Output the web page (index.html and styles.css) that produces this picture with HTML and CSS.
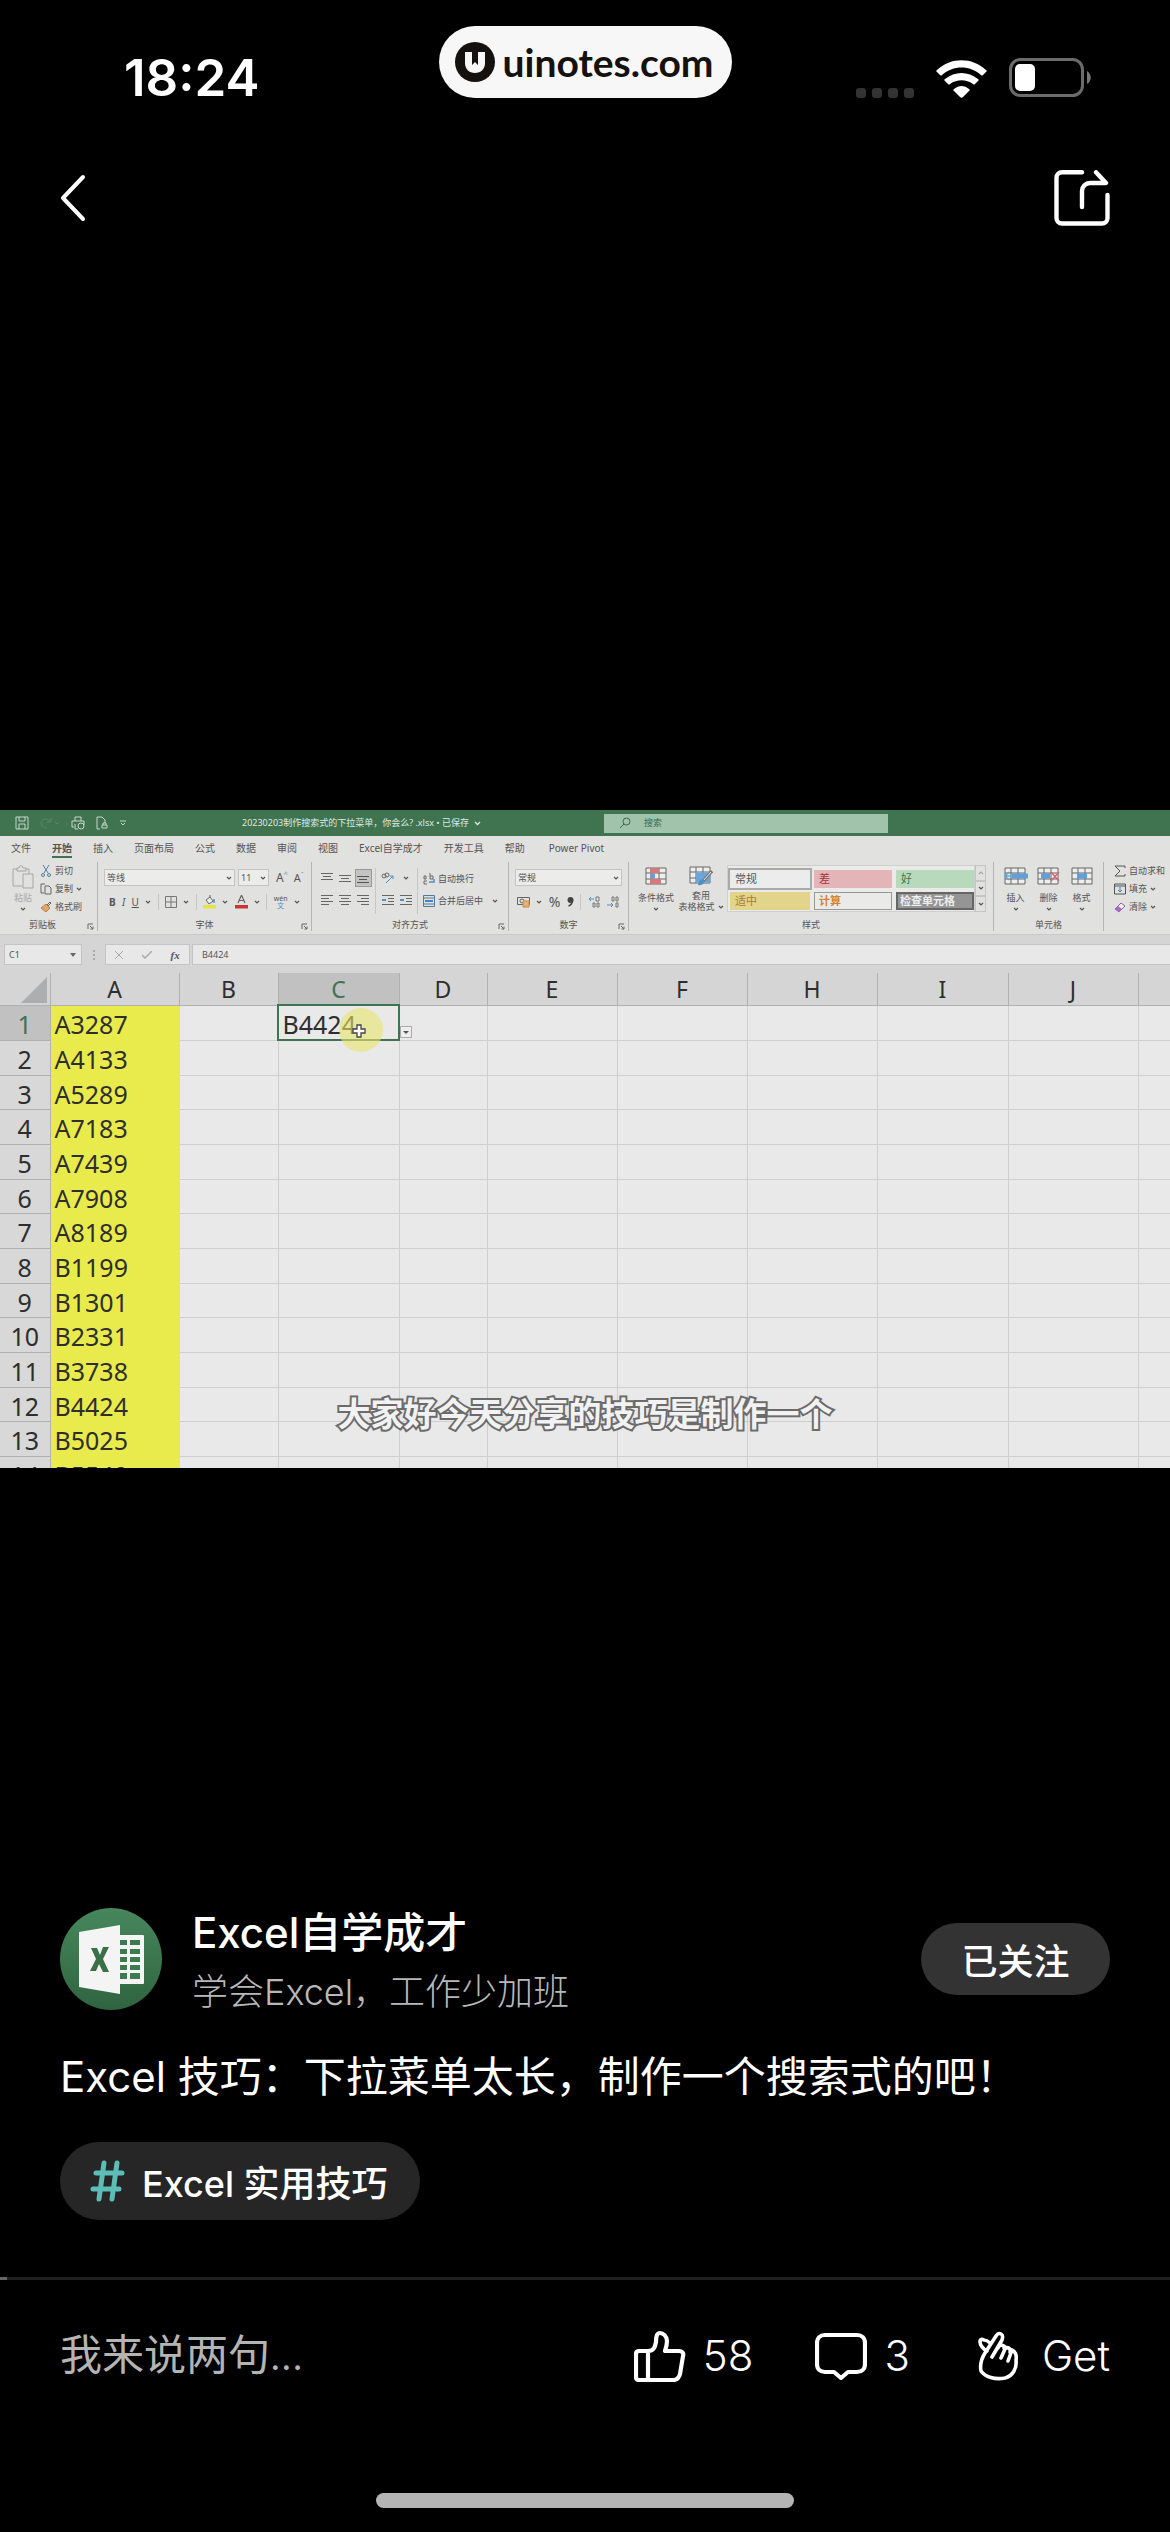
FILE: index.html
```html
<!DOCTYPE html>
<html lang="zh-CN">
<head>
<meta charset="utf-8">
<meta name="viewport" content="width=device-width, initial-scale=1">
<title>Excel 技巧</title>
<link rel="stylesheet" href="styles.css">
</head>
<body>
<svg class="defs" aria-hidden="true">
  <symbol id="caret" viewBox="0 0 6 4"><path d="M1 1l2 2 2-2" fill="none" stroke="#555" stroke-width="1.2"/></symbol>
  <symbol id="launch" viewBox="0 0 7 7"><path d="M1 6V1h5M3 3l3 3M6 3.500V6H3.500" fill="none" stroke="#666"/></symbol>
  <symbol id="grid" viewBox="0 0 22 18"><path d="M1 1h20v16H1zM1 6h20M1 12h20M7 1v16M14 1v16" fill="#eee" stroke="#666"/></symbol>
</svg>
<div class="screen">
  <header class="top">
    <div class="status">
      <time class="clock">18:24</time>
      <div class="brand">
        <svg width="40" height="40" viewBox="0 0 40 40"><circle cx="20" cy="20" r="20" fill="#14110f"/><path d="M10 10h7v13l3-3 3 3V10h7v11c0 6-4 10-10 10s-10-4-10-10z" fill="#f7f7f7"/></svg>
        <span>uinotes.com</span>
      </div>
      <div class="signals">
        <svg width="58" height="10" viewBox="0 0 58 10" fill="#333"><rect width="10" height="10" rx="3"/><rect x="16" width="10" height="10" rx="3"/><rect x="32" width="10" height="10" rx="3"/><rect x="48" width="10" height="10" rx="3"/></svg>
        <svg class="wifi" width="51" height="38" viewBox="0 0 51 38" fill="#fff"><path d="M1 10C15-3 36-3 50 10c1 1 1 1 0 2l-3 3c-1 1-1 1-2 0C34 5 17 5 6 15c-1 1-1 1-2 0l-3-3c-1-1-1-1 0-2z"/><path d="M9 19c10-8 23-8 33 0 1 1 1 1 0 2l-3 3c-1 1-1 1-2 0-7-5-16-5-23 0-1 1-1 1-2 0l-3-3c-1-1-1-1 0-2z"/><path d="M18 29c5-4 10-4 15 0 1 1 1 1 0 2l-6 6c-1 1-2 1-3 0l-6-6c-1-1-1-1 0-2z"/></svg>
        <svg width="83" height="40" viewBox="0 0 83 40"><rect x="1.500" y="1.500" width="72" height="36" rx="10" fill="none" stroke="#6b6b6b" stroke-width="3"/><rect x="6" y="6" width="20" height="27" rx="5" fill="#fff"/><path d="M78 13c5 3 5 10 0 13z" fill="#777"/></svg>
      </div>
    </div>
    <nav class="nav">
      <button class="icon-btn" aria-label="返回"><svg width="28" height="50" viewBox="0 0 28 50"><path d="M24 4L4 25l20 21" fill="none" stroke="#fff" stroke-width="4" stroke-linecap="round" stroke-linejoin="round"/></svg></button>
      <button class="icon-btn" aria-label="分享"><svg width="56" height="56" viewBox="0 0 56 56" fill="none" stroke="#fff" stroke-width="4.400" stroke-linecap="round" stroke-linejoin="round"><path d="M28 2.300H8a5.500 5.500 0 0 0-5.500 5.500V48a5.500 5.500 0 0 0 5.500 5.500h40a5.500 5.500 0 0 0 5.500-5.500V25"/><path d="M42 2.300L52 13H36a8 8 0 0 0-8 8v16"/></svg></button>
    </nav>
  </header>

  <main class="stage">
    <section class="video" aria-label="视频">
      <div class="titlebar">
        <div class="quick">
          <svg width="14" height="14" viewBox="0 0 14 14" fill="none" stroke="#c7d8cb"><path d="M1 1h12v12H1zM4 1v4h6V1M4 13V8h6v5"/></svg>
          <svg width="20" height="14" viewBox="0 0 20 14" fill="none" stroke="#5d8869"><path d="M11 2v4H7M11 6C7 1 1 3 1 7c0 3 3 5 5 5M15 6l2 2 2-2"/></svg>
          <svg width="14" height="14" viewBox="0 0 14 14" fill="none" stroke="#c7d8cb"><path d="M4 5V1h6v4M3 11H1V5h12v4M4 8v5h3"/><circle cx="10" cy="10" r="3"/></svg>
          <svg width="13" height="14" viewBox="0 0 13 14" fill="none" stroke="#c7d8cb"><path d="M4 13H1V1h5l3 3v3M6 12V9h5v3zM7 9V7h3v2"/></svg>
          <svg width="6" height="6" viewBox="0 0 6 6" fill="none" stroke="#c7d8cb"><path d="M0 1h6M1 3l2 2 2-2"/></svg>
        </div>
        <div class="filename">20230203制作搜索式的下拉菜单，你会么? .xlsx • 已保存 <svg width="7" height="5" viewBox="0 0 7 5"><path d="M1 1l2.500 2.500L6 1" fill="none" stroke="#dfe9e1" stroke-width="1.300"/></svg></div>
        <div class="search"><svg width="12" height="12" viewBox="0 0 12 12" fill="none" stroke="#3c6b49"><circle cx="7.500" cy="4.500" r="3.500"/><path d="M5 7l-4 4"/></svg>搜索</div>
      </div>
      <div class="tabs">
        <span>文件</span><span class="active">开始</span><span>插入</span><span>页面布局</span><span>公式</span><span>数据</span><span>审阅</span><span>视图</span><span>Excel自学成才</span><span>开发工具</span><span>帮助</span><span class="pivot">Power Pivot</span>
      </div>
      <div class="ribbon">
        <div class="group g-clip">
          <div class="body">
            <div class="big faded"><svg width="22" height="24" viewBox="0 0 22 24" fill="none" stroke="#a6a6a6"><path d="M10 21H1V4h4M14 4h3v5M5 6V3h2c0-3 4-3 4 0h3v3zM11 9h10v14H11z"/></svg><span>粘贴</span><svg class="caret"><use href="#caret"/></svg></div>
            <div class="stack">
              <div class="item"><svg width="12" height="12" viewBox="0 0 12 12" fill="none" stroke="#4f7ea8"><path d="M3 0l5 8M9 0L4 8"/><circle cx="3" cy="10" r="1.500"/><circle cx="9" cy="10" r="1.500"/></svg>剪切</div>
              <div class="item"><svg width="12" height="12" viewBox="0 0 12 12" fill="none" stroke="#666"><path d="M4 10H1V1h4M5 3h4l2 2v6H5z"/></svg>复制<svg class="caret"><use href="#caret"/></svg></div>
              <div class="item"><svg width="12" height="12" viewBox="0 0 12 12" fill="none" stroke="#666"><path d="M7 4l3-3 1 1-3 3"/><path d="M6 3l4 4-4 4-5-4z" fill="#e2a76b" stroke="#b98046"/></svg>格式刷</div>
            </div>
          </div>
          <div class="label">剪贴板<svg class="launch"><use href="#launch"/></svg></div>
        </div>
        <div class="group g-font">
          <div class="body rows">
            <div class="row">
              <div class="combo wide">等线<svg class="caret"><use href="#caret"/></svg></div>
              <div class="combo size">11<svg class="caret"><use href="#caret"/></svg></div>
              <span class="glyph">A<sup>^</sup></span><span class="glyph sm">A<sup>ˇ</sup></span>
            </div>
            <div class="row spread">
              <b>B</b><i>I</i><u>U</u><svg class="caret"><use href="#caret"/></svg><span class="sep"></span>
              <svg width="12" height="12" viewBox="0 0 12 12" fill="none" stroke="#777"><path d="M.500.500h11v11H.500zM6 1v10M1 6h10"/></svg><svg class="caret"><use href="#caret"/></svg><span class="sep"></span>
              <svg width="13" height="14" viewBox="0 0 13 14"><path d="M3 5l4-3 3 4-4 3zM7 2V0" fill="#eee" stroke="#666"/><path d="M11 4v4" stroke="#4f8fc4" stroke-width="1.500"/><path d="M0 10h13v3.500H0z" fill="#e5e53c"/></svg><svg class="caret"><use href="#caret"/></svg>
              <svg width="13" height="14" viewBox="0 0 13 14"><path d="M3 8l3.500-8L10 8M4.500 5.500h4" fill="none" stroke="#666" stroke-width="1.200"/><path d="M0 10h13v3.500H0z" fill="#c93434"/></svg><svg class="caret"><use href="#caret"/></svg><span class="sep"></span>
              <span class="pinyin">wén<br><em>文</em></span><svg class="caret"><use href="#caret"/></svg>
            </div>
          </div>
          <div class="label">字体<svg class="launch"><use href="#launch"/></svg></div>
        </div>
        <div class="group g-align">
          <div class="body">
            <div class="aligns">
              <svg width="12" height="12" viewBox="0 0 12 12" stroke="#666"><path d="M0 1.500h12M2 4.500h8M0 7.500h12"/></svg>
              <svg width="12" height="12" viewBox="0 0 12 12" stroke="#666"><path d="M0 3.500h12M2 6.500h8M0 9.500h12"/></svg>
              <span class="pressed"><svg width="12" height="12" viewBox="0 0 12 12" stroke="#555"><path d="M0 4.500h12M2 7.500h8M0 10.500h12"/></svg></span>
              <svg width="12" height="12" viewBox="0 0 12 12" stroke="#666"><path d="M0 1.500h12M0 4.500h8M0 7.500h12M0 10.500h8"/></svg>
              <svg width="12" height="12" viewBox="0 0 12 12" stroke="#666"><path d="M0 1.500h12M2 4.500h8M0 7.500h12M2 10.500h8"/></svg>
              <svg width="12" height="12" viewBox="0 0 12 12" stroke="#666"><path d="M0 1.500h12M4 4.500h8M0 7.500h12M4 10.500h8"/></svg>
            </div>
            <div class="indents">
              <svg width="14" height="12" viewBox="0 0 14 12" fill="none" stroke="#666"><circle cx="3" cy="4" r="2"/><circle cx="6" cy="3" r="2"/><path d="M5 11l7-7M9 4h3v3" stroke="#4f8fc4"/></svg><svg class="caret"><use href="#caret"/></svg>
              <svg width="12" height="12" viewBox="0 0 12 12" stroke="#666"><path d="M0 1.500h12M6 4.500h6M6 7.500h6M0 10.500h12"/><path d="M0 6h4" stroke="#4f8fc4" stroke-width="2"/></svg>
              <svg width="12" height="12" viewBox="0 0 12 12" stroke="#666"><path d="M0 1.500h12M6 4.500h6M6 7.500h6M0 10.500h12"/><path d="M0 6h4" stroke="#4f8fc4" stroke-width="2"/></svg>
            </div>
            <div class="wraps">
              <div class="item"><svg width="12" height="12" viewBox="0 0 12 12" fill="none" stroke="#666"><path d="M1 3h2v3H1zM7 0v6h3V3H7M4 8H1v3h3"/><path d="M11 6v3H6" stroke="#4f8fc4" stroke-width="1.500"/></svg>自动换行</div>
              <div class="item"><svg width="12" height="12" viewBox="0 0 12 12" fill="none" stroke="#557a99"><path d="M.500.500h11v11H.500zM1 3h10M1 9h10"/><path d="M2 6h8" stroke="#3f87c8" stroke-width="2"/></svg>合并后居中<svg class="caret"><use href="#caret"/></svg></div>
            </div>
          </div>
          <div class="label">对齐方式<svg class="launch"><use href="#launch"/></svg></div>
        </div>
        <div class="group g-num">
          <div class="body rows">
            <div class="row"><div class="combo full">常规<svg class="caret"><use href="#caret"/></svg></div></div>
            <div class="row spread">
              <svg width="13" height="12" viewBox="0 0 13 12" fill="none" stroke="#666"><path d="M.500 1.500h12v7H.500z"/><circle cx="5" cy="5" r="2"/><path d="M6 5h6v6H6z" fill="#e2b27a" stroke="#c98c45"/></svg><svg class="caret"><use href="#caret"/></svg><span class="pct">%</span>
              <svg width="7" height="10" viewBox="0 0 7 10"><circle cx="3.500" cy="3" r="3" fill="#444"/><path d="M5.500 3c0 3-1 5-4 6" fill="none" stroke="#444" stroke-width="1.600"/></svg><span class="sep"></span>
              <svg width="13" height="12" viewBox="0 0 13 12" fill="none" stroke="#777"><path d="M8 1h3v4H8zM5 7h2v4H5zM9 7h2v4H9z"/><path d="M6 3H1M3 1L1 3l2 2" stroke="#4f8fc4"/></svg>
              <svg width="13" height="12" viewBox="0 0 13 12" fill="none" stroke="#777"><path d="M5 1h2v4H5zM9 1h2v4H9zM9 7h2v4H9z"/><path d="M0 9h6M4 7l2 2-2 2" stroke="#4f8fc4"/></svg>
            </div>
          </div>
          <div class="label">数字<svg class="launch"><use href="#launch"/></svg></div>
        </div>
        <div class="group g-style">
          <div class="body">
            <div class="big"><svg width="22" height="18" viewBox="0 0 22 18"><use href="#grid" width="22" height="18"/><path d="M5 1h9v5H5zM5 12h11v5H5z" fill="#d8777c"/><path d="M5 6.500h5v5H5z" fill="#6f9ecb"/></svg><span>条件格式</span><svg class="caret"><use href="#caret"/></svg></div>
            <div class="big"><svg width="24" height="20" viewBox="0 0 24 20"><use href="#grid" width="22" height="18"/><path d="M7 6.500h14v10H7z" fill="#6aa5dc"/><path d="M23 5l-9 10" stroke="#777" stroke-width="3"/><path d="M22 6l-8 9" stroke="#eee"/><path d="M15 14c-2-2-5 0-6 5 4 1 7-2 6-5z" fill="#4f8fc4"/></svg><span>套用</span><span class="two">表格格式<svg class="caret"><use href="#caret"/></svg></span></div>
            <div class="gallery">
              <span class="c-normal">常规</span><span class="c-bad">差</span><span class="c-good">好</span>
              <span class="c-neutral">适中</span><span class="c-calc">计算</span><span class="c-check">检查单元格</span>
            </div>
            <div class="scroller"><span><svg class="caret up"><use href="#caret"/></svg></span><span><svg class="caret"><use href="#caret"/></svg></span><span><svg class="caret"><use href="#caret"/></svg></span></div>
          </div>
          <div class="label">样式</div>
        </div>
        <div class="group g-cells">
          <div class="body">
            <div class="big"><svg width="24" height="18" viewBox="0 0 24 18"><use href="#grid" width="22" height="18"/><path d="M8 6.500h16v5H8z" fill="#5f9fdb"/><path d="M9 9H1M5 5L1 9l4 4" fill="none" stroke="#5aa7d6" stroke-width="1.500"/></svg><span>插入</span><svg class="caret"><use href="#caret"/></svg></div>
            <div class="big"><svg width="24" height="18" viewBox="0 0 24 18"><use href="#grid" width="22" height="18"/><path d="M4 6.500h9v5H4z" fill="#5f9fdb"/><path d="M14 5l8 9M22 5l-8 9" stroke="#d9676c" stroke-width="1.500"/></svg><span>删除</span><svg class="caret"><use href="#caret"/></svg></div>
            <div class="big"><svg width="22" height="18" viewBox="0 0 22 18"><use href="#grid" width="22" height="18"/><path d="M6 6.500h10v5H6z" fill="#5f9fdb"/></svg><span>格式</span><svg class="caret"><use href="#caret"/></svg></div>
          </div>
          <div class="label">单元格</div>
        </div>
        <div class="group g-edit">
          <div class="body">
            <div class="stack">
              <div class="item"><svg width="12" height="12" viewBox="0 0 12 12" fill="none" stroke="#555"><path d="M11 3V1H1l5 5-5 5h10V9"/></svg>自动求和</div>
              <div class="item"><svg width="12" height="12" viewBox="0 0 12 12" fill="none" stroke="#555"><path d="M.500 1h11v10H.500zM1 3h10"/><path d="M6 4v5M4 7l2 2 2-2" stroke="#3f87c8"/></svg>填充<svg class="caret"><use href="#caret"/></svg></div>
              <div class="item"><svg width="12" height="12" viewBox="0 0 12 12"><path d="M1 8l6-6 4 3-6 6z" fill="#eee" stroke="#9a5fb0"/><path d="M1 8l3-3 4 3-3 3z" fill="#a76cc0"/></svg>清除<svg class="caret"><use href="#caret"/></svg></div>
            </div>
          </div>
        </div>
      </div>
      <div class="formula">
        <div class="namebox">C1<svg width="6" height="4" viewBox="0 0 6 4"><path d="M0 0h6L3 4z" fill="#666"/></svg></div>
        <svg class="dots" width="2" height="10" viewBox="0 0 2 10" fill="#aaa"><path d="M0 0h2v2H0zM0 4h2v2H0zM0 8h2v2H0z"/></svg>
        <div class="fx"><svg width="8" height="8" viewBox="0 0 8 8"><path d="M0 0l8 8M8 0L0 8" stroke="#aaa"/></svg><svg width="10" height="8" viewBox="0 0 10 8"><path d="M0 4l3 3 7-7" fill="none" stroke="#aaa" stroke-width="1.500"/></svg><i>fx</i></div>
        <div class="expr">B4424</div>
      </div>
      <table class="sheet">
        <colgroup><col class="w-n"><col class="w-a"><col class="w-b"><col class="w-c"><col class="w-d"><col class="w-e"><col class="w-e"><col class="w-e"><col class="w-i"><col class="w-e"><col class="w-k"></colgroup>
        <thead><tr><th class="corner"><svg width="26" height="26" viewBox="0 0 26 26"><path d="M26 0v26H0z" fill="#adaeb0"/></svg></th><th>A</th><th>B</th><th class="sel">C</th><th>D</th><th>E</th><th>F</th><th>H</th><th>I</th><th>J</th><th></th></tr></thead>
        <tbody>
          <tr><th class="sel">1</th><td>A3287</td><td></td><td class="picked">B4424<svg class="cursor" width="44" height="44" viewBox="0 0 44 44"><circle cx="22" cy="22" r="22" fill="#e9e56a" fill-opacity=".6"/><path d="M18 17h4v4h4v4h-4v4h-4v-4h-4v-4h4z" fill="#fff" stroke="#444" stroke-width="1.300"/></svg><svg class="drop" width="12" height="12" viewBox="0 0 12 12"><path d="M.500.500h11v11H.500z" fill="#eee" stroke="#aaa"/><path d="M3 5h6L6 8z" fill="#555"/></svg></td><td></td><td></td><td></td><td></td><td></td><td></td><td></td></tr>
          <tr><th>2</th><td>A4133</td><td></td><td></td><td></td><td></td><td></td><td></td><td></td><td></td><td></td></tr>
          <tr><th>3</th><td>A5289</td><td></td><td></td><td></td><td></td><td></td><td></td><td></td><td></td><td></td></tr>
          <tr><th>4</th><td>A7183</td><td></td><td></td><td></td><td></td><td></td><td></td><td></td><td></td><td></td></tr>
          <tr><th>5</th><td>A7439</td><td></td><td></td><td></td><td></td><td></td><td></td><td></td><td></td><td></td></tr>
          <tr><th>6</th><td>A7908</td><td></td><td></td><td></td><td></td><td></td><td></td><td></td><td></td><td></td></tr>
          <tr><th>7</th><td>A8189</td><td></td><td></td><td></td><td></td><td></td><td></td><td></td><td></td><td></td></tr>
          <tr><th>8</th><td>B1199</td><td></td><td></td><td></td><td></td><td></td><td></td><td></td><td></td><td></td></tr>
          <tr><th>9</th><td>B1301</td><td></td><td></td><td></td><td></td><td></td><td></td><td></td><td></td><td></td></tr>
          <tr><th>10</th><td>B2331</td><td></td><td></td><td></td><td></td><td></td><td></td><td></td><td></td><td></td></tr>
          <tr><th>11</th><td>B3738</td><td></td><td></td><td></td><td></td><td></td><td></td><td></td><td></td><td></td></tr>
          <tr><th>12</th><td>B4424</td><td></td><td></td><td></td><td></td><td></td><td></td><td></td><td></td><td></td></tr>
          <tr><th>13</th><td>B5025</td><td></td><td></td><td></td><td></td><td></td><td></td><td></td><td></td><td></td></tr>
          <tr><th>14</th><td>B5540</td><td></td><td></td><td></td><td></td><td></td><td></td><td></td><td></td><td></td></tr>
        </tbody>
      </table>
      <p class="caption">大家好今天分享的技巧是制作一个</p>
    </section>
  </main>

  <section class="info">
    <div class="author">
      <svg class="avatar" width="102" height="102" viewBox="0 0 102 102"><defs><linearGradient id="ag" x2="0" y2="1"><stop stop-color="#47875c"/><stop offset="1" stop-color="#2f6440"/></linearGradient></defs><circle cx="51" cy="51" r="51" fill="url(#ag)"/><rect x="52" y="27" width="32" height="49" rx="1" fill="#f4f4f4"/><path d="M58 32h9v5h-9zM70 32h10v5H70zM58 41h9v5h-9zM70 41h10v5H70zM58 49h9v5h-9zM70 49h10v5H70zM58 57h9v5h-9zM70 57h10v5H70zM58 65h9v6h-9zM70 65h10v6H70z" fill="#3c7a50"/><path d="M19 24l41-7v69l-41-7z" fill="#f4f4f4"/><path d="M31 40h6l3 7 3-8h6l-6 12 6 13h-6l-4-8-3 7h-6l6-12z" fill="#3a7048"/></svg>
      <div class="who"><h2>Excel自学成才</h2><p>学会Excel，工作少加班</p></div>
      <button class="follow">已关注</button>
    </div>
    <h1>Excel 技巧：下拉菜单太长，制作一个搜索式的吧！</h1>
    <a class="tag" href="#"><svg width="35" height="42" viewBox="0 0 35 42" fill="none" stroke="#5cbdb6" stroke-width="5" stroke-linecap="round"><path d="M14 3L9 39M27 3l-5 36M6 13h26M3 29h26"/></svg>Excel 实用技巧</a>
  </section>

  <div class="progress"><div class="played"></div></div>
  <footer class="bar">
    <input class="comment" type="text" placeholder="我来说两句..." aria-label="评论">
    <button class="action"><svg width="52" height="52" viewBox="0 0 52 52" fill="none" stroke="#fff" stroke-width="4.200" stroke-linejoin="round"><path d="M5 21h9c6 0 7-4 8-9 0-6 1-9 4-9s7 3 7 8c0 4-1 7-2 10h14c3 0 5 2 4 5l-3 18c-1 4-3 6-7 6H5c-2 0-3-1-3-3V24c0-2 1-3 3-3zM14 21v29"/></svg>58</button>
    <button class="action"><svg width="52" height="48" viewBox="0 0 52 48" fill="none" stroke="#fff" stroke-width="4.200" stroke-linejoin="round"><path d="M10 3h32c5 0 8 3 8 8v21c0 5-3 8-8 8h-9l-7 6-7-6h-9c-5 0-8-3-8-8V11c0-5 3-8 8-8z"/></svg>3</button>
    <button class="action get"><svg width="42" height="50" viewBox="0 0 42 50" fill="none" stroke="#fff" stroke-width="3.600" stroke-linecap="round" stroke-linejoin="round"><path d="M14 26L24 9M9 20C5 18 2 14 2 11c0-3 2-3 4-2 2 0 4 1 6 3M7 22L18 5c2-3 3-3 5-2s2 3 1 6l-4 8M7 22c-5 8-5 13-4 18 4 6 14 9 24 7 8-2 12-10 11-18 1-5-1-9-4-10l-4 11M14 26L20 16c4-3 7-2 7 2l-4 9M26 17c4-1 7 0 6 4"/></svg>Get</button>
  </footer>
  <div class="home"></div>
</div>
</body>
</html>
```
FILE: styles.css
```css
* { box-sizing: border-box; }
body { margin: 0; background: #000; color: #fff; font-family: Inter, "Noto Sans CJK SC", sans-serif; }
h1, h2, p { margin: 0; font-weight: 400; }
button { border: 0; padding: 0; background: none; color: inherit; font: inherit; }
svg { flex: none; display: block; }
.defs { position: absolute; width: 0; height: 0; }
.screen { min-height: 100vh; display: flex; flex-direction: column; }

/* status bar and navigation */
.status { display: grid; grid-template-columns: 1fr auto 1fr; height: 124px; padding: 26px 78px 0 124px; }
.clock { font: 600 51px/60px Inter, sans-serif; padding-top: 22px; }
.brand { display: flex; align-items: center; gap: 8px; width: 293px; height: 72px; margin-right: 46px; padding: 0 16px; border-radius: 36px; background: #f7f7f7; color: #14110f; font: 700 39px/46px Lato, sans-serif; }
.signals { display: flex; justify-content: flex-end; align-items: flex-end; height: 72px; gap: 22px; }
.nav { display: flex; justify-content: space-between; align-items: center; padding: 46px 60px 0 59px; height: 102px; }
.icon-btn { display: flex; }

/* video frame */
.stage { flex: 1; display: flex; align-items: center; padding-top: 150px; }
.video { position: relative; width: 100%; aspect-ratio: 1170 / 658; overflow: hidden; background: #d5d5d5; color: #555; font: 9px/12px "Noto Sans", "Noto Sans CJK SC", sans-serif; white-space: nowrap; }
.titlebar { display: flex; align-items: center; height: 26px; padding-left: 15px; background: #40734f; color: #dfe9e1; }
.quick { display: flex; align-items: center; gap: 11px; width: 227px; }
.filename { display: flex; align-items: center; gap: 5px; width: 362px; }
.search { display: flex; align-items: center; gap: 13px; width: 284px; height: 19px; padding-left: 15px; background: #a1c2ab; color: #3c6b49; }
.tabs { display: flex; gap: 21px; height: 26px; padding: 3px 11px 0; background: #e1e1df; font-size: 10px; line-height: 18px; }
.tabs .active { height: 19px; border-bottom: 2px solid #40734f; font-weight: 700; }
.tabs .pivot { margin-left: 3px; }
.ribbon { display: flex; height: 73px; padding-bottom: 3px; background: #e1e1df; border-bottom: 1px solid #c9c9c9; }
.group { display: flex; flex-direction: column; border-right: 1px solid #b5b5b5; }
.g-clip { flex: 0 0 98px; }
.g-font { flex: 0 0 214px; }
.g-align { flex: 0 0 197px; }
.g-num { flex: 0 0 120px; }
.g-style { flex: 0 0 365px; }
.g-cells { flex: 0 0 109px; }
.g-edit { flex: 1; border: 0; }
.body { display: flex; height: 57px; }
.label { position: relative; height: 14px; text-align: center; line-height: 16px; }
.g-clip .label { padding-right: 12px; }
.caret { width: 6px; height: 4px; }
.launch { position: absolute; right: 3px; bottom: 1px; width: 7px; height: 7px; }
.big { display: flex; flex-direction: column; align-items: center; height: 50px; }
.big > svg:first-child { margin-bottom: auto; }
.big .caret { margin: 3px 0 1px; }
.big .two .caret { margin: 0; }
.two { display: flex; align-items: center; gap: 3px; line-height: 10px; }
.g-clip .body { padding-left: 12px; gap: 6px; }
.g-clip .big { padding-top: 3px; }
.faded { color: #aaa; }
.stack, .wraps { display: flex; flex-direction: column; }
.item { display: flex; align-items: center; gap: 3px; height: 18px; }
.rows { flex-direction: column; padding: 7px 6px 0; gap: 7px; }
.row { display: flex; align-items: center; height: 17px; gap: 3px; }
.combo { display: flex; align-items: center; justify-content: space-between; height: 17px; padding: 0 2px; background: #ececea; border: 1px solid #c4c4c4; }
.combo.wide { width: 131px; }
.combo.size { width: 31px; }
.combo.full { flex: 1; }
.glyph { margin-left: 4px; font-size: 12px; line-height: 16px; }
.glyph.sm { font-size: 11px; margin-left: 3px; }
.glyph sup { font-size: 7px; color: #4f8fc4; line-height: 1px; }
.spread { justify-content: space-between; gap: 0; padding: 0 5px; font-size: 10px; }
.g-num .spread { padding: 0 2px; }
.sep { width: 1px; height: 16px; background: #c6c6c6; }
.pinyin { font-size: 7px; line-height: 7px; text-align: center; }
.pinyin em { font-style: normal; color: #4f8fc4; }
.pct { font-size: 14px; }
.g-align .body { padding: 6px 0 0 6px; }
.aligns { display: grid; grid-template-columns: repeat(3, 18px); grid-template-rows: 19px 26px; place-items: center; }
.pressed { display: grid; place-items: center; width: 17px; height: 18px; background: #c3c3c3; border: 1px solid #999; }
.indents { display: grid; grid-template-columns: 18px 18px; grid-template-rows: 19px 26px; place-items: center; margin-left: 3px; padding-left: 3px; border-left: 1px solid #c6c6c6; width: 42px; height: 46px; }
.wraps { padding-left: 5px; border-left: 1px solid #c6c6c6; height: 46px; }
.wraps .item { height: 22px; }
.wraps .item .caret { margin-left: 6px; }
.g-style .body { padding: 3px 7px 0 8px; }
.g-style .big { width: 38px; padding-top: 2px; height: 47px; }
.g-style .big + .big { width: 46px; margin-left: 3px; padding-top: 1px; }
.gallery { display: grid; grid-template-columns: 80px 78px 78px; grid-template-rows: 18px 18px; gap: 4px; width: 248px; height: 47px; margin-left: 3px; padding: 4px 2px; background: #eaeae8; border: 1px solid #cfcfcf; font-size: 11px; line-height: 16px; }
.gallery span { padding-left: 4px; border: 1px solid transparent; }
.gallery .c-normal { outline: 2px solid #aaa; background: #ececec; }
.gallery .c-bad { background: #e3b4b8; color: #a03339; }
.gallery .c-good { background: #b9d9bd; color: #3d7a45; }
.gallery .c-neutral { background: #e2d48b; color: #a97c33; }
.gallery .c-calc { border-color: #999; color: #d2862c; font-weight: 700; }
.gallery .c-check { background: #959595; border: 2px solid #666; color: #eee; line-height: 14px; padding-left: 2px; font-weight: 700; }
.scroller { display: grid; grid-template-rows: 1fr 1fr 1fr; width: 11px; height: 47px; }
.scroller span { display: grid; place-items: center; border: 1px solid #c4c4c4; }
.up { transform: rotate(180deg); opacity: .4; }
.g-cells .body { padding: 5px 9px 0; gap: 8px; }
.g-cells .big { width: 25px; height: 45px; }
.g-edit .body { padding-left: 10px; }
.formula { display: flex; align-items: center; height: 38px; padding: 1px 0 0 4px; background: #d5d5d5; }
.formula > div { display: flex; align-items: center; height: 21px; background: #e8e8e8; border: 1px solid #c4c4c4; }
.formula .namebox { justify-content: space-between; width: 78px; padding: 0 5px 0 4px; }
.dots { margin: 0 10px 0 11px; }
.formula .fx { width: 85px; justify-content: space-around; }
.fx i { font: italic 700 11px/14px "Liberation Serif", serif; }
.formula .expr { flex: 1; margin-left: 2px; padding-left: 9px; border-right: 0; }

/* worksheet */
.sheet { width: 100%; table-layout: fixed; border-collapse: collapse; background: #e9e9e9; color: #2e2e2e; font-family: "Noto Sans", sans-serif; font-size: 25px; line-height: 29px; }
.w-n { width: 50px; } .w-a { width: 129px; } .w-b { width: 99px; } .w-c { width: 121px; } .w-d { width: 88px; }
.w-e { width: 130px; } .w-i { width: 131px; } .w-k { width: 32px; }
.sheet th, .sheet td { height: 35px; padding: 4px 0 0; font-weight: 400; border-right: 1px solid #cfcfcf; border-bottom: 1px solid #cfcfcf; }
.sheet tbody tr:nth-child(3n) > * { height: 34px; }
.sheet thead th { height: 32px; padding-top: 2px; background: #d5d5d5; font-size: 23px; border-color: #b0b0b0; }
.sheet th { background: #d8d8d8; border-color: #b0b0b0; }
.sheet .sel, .sheet thead .sel { background: #c1c1c1; color: #40734f; }
.sheet td { padding-left: 4px; }
.sheet td:nth-child(2) { background: #e9eb4d; border-color: #e9eb4d; }
.sheet .picked { position: relative; outline: 2px solid #40734f; outline-offset: -1px; }
.corner svg { margin: 0 3px 0 auto; }
.cursor { position: absolute; right: 16px; top: 2px; }
.drop { position: absolute; right: -13px; bottom: 2px; }
.caption { position: absolute; inset: auto 0 32px; text-align: center; color: #f2f2f2; font: 700 33px/48px "Noto Sans CJK SC", sans-serif; -webkit-text-stroke: 4px #6b6b6b; paint-order: stroke fill; }

/* description */
.info { padding: 0 60px 57px; }
.author { display: flex; align-items: center; gap: 30px; }
.who { flex: 1; padding-top: 4px; }
.who h2 { font-size: 42px; line-height: 54px; font-weight: 500; }
.who p { margin-top: 8px; font-size: 36px; line-height: 48px; font-weight: 300; color: #b8b8b8; }
.follow { width: 189px; height: 72px; border-radius: 36px; background: #333; font-size: 36px; font-weight: 500; }
.info h1 { margin-top: 31px; font-size: 42px; line-height: 60px; }
.tag { display: inline-flex; align-items: center; gap: 17px; height: 78px; margin-top: 35px; padding: 0 32px 0 30px; border-radius: 39px; background: #262626; color: #fff; font-size: 36px; font-weight: 500; text-decoration: none; }

/* bottom bar */
.progress { height: 3px; background: #202020; }
.played { width: 7px; height: 3px; background: #666; }
.bar { display: flex; align-items: center; height: 152px; padding: 0 60px; }
.comment { flex: 1; min-width: 0; padding: 0; border: 0; outline: 0; background: none; color: #fff; font: 400 42px/60px Roboto, "Noto Sans CJK SC", sans-serif; }
.comment::placeholder { color: #b4b4b4; opacity: 1; }
.action { display: flex; align-items: center; gap: 17px; margin-left: 62px; font-size: 42px; line-height: 60px; font-weight: 300; }
.action.get { margin-left: 68px; gap: 22px; }
.home { width: 418px; height: 15px; margin: 61px auto 24px; border-radius: 8px; background: #b4b4b4; }
```
